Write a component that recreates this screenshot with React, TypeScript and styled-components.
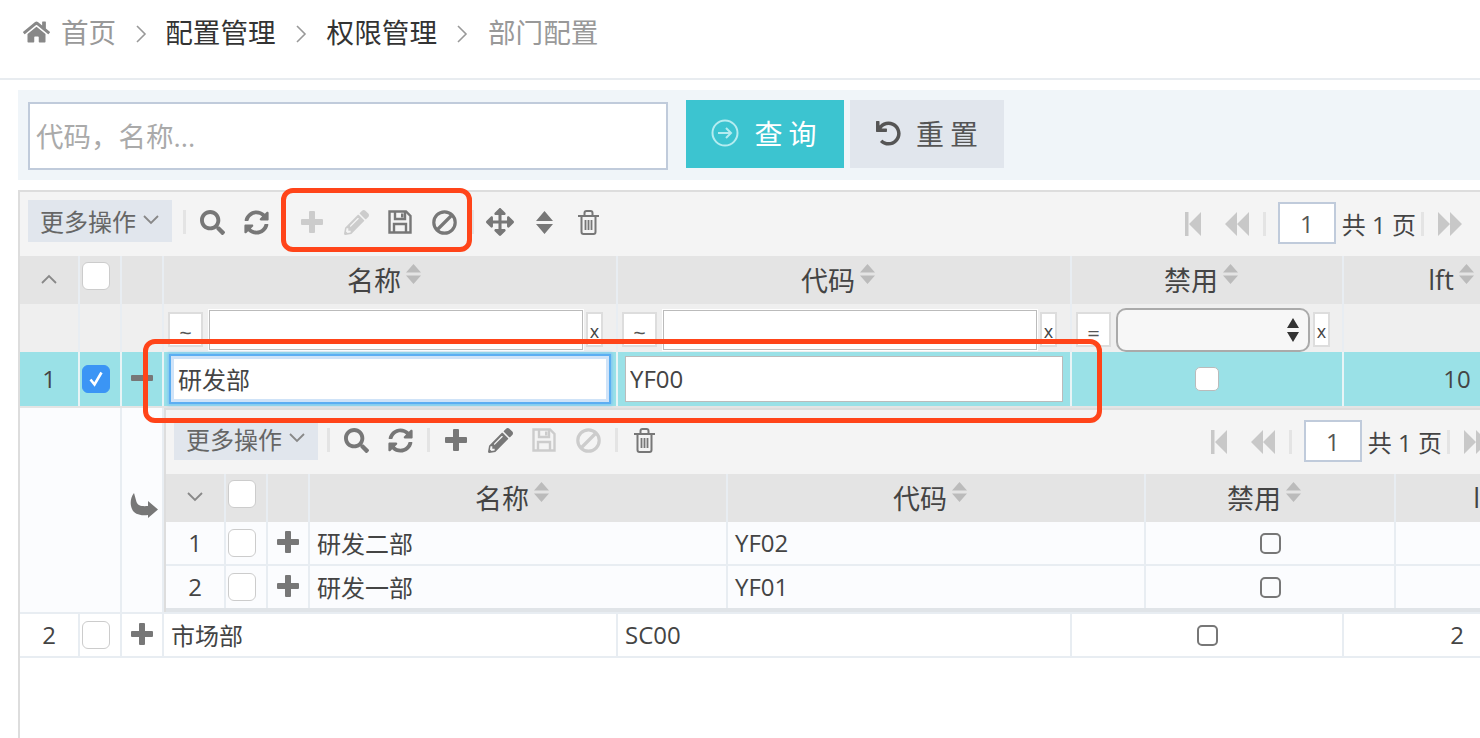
import React from "react";
import styled, { createGlobalStyle } from "styled-components";
import { FaArrowsAlt, FaHome, FaPencilAlt, FaSearch, FaSyncAlt, FaUndo } from "react-icons/fa";

const GlobalStyle = createGlobalStyle`
  html, body {
    margin: 0;
    padding: 0;
    background: #ffffff;
    overflow: hidden;
  }
  body {
    font-family: "Open Sans", "Noto Sans CJK SC", sans-serif;
    color: #444444;
  }
  * { box-sizing: border-box; }
`;

const Page = styled.div`
  position: relative;
  width: 1480px;
  height: 738px;
  overflow: hidden;
`;

const Breadcrumb = styled.div`
  height: 80px;
  border-bottom: 2px solid #e8ecf0;
  display: flex;
  align-items: flex-start;
  padding: 15px 0 0 23px;
  font-size: 27.6px;
  line-height: 34px;
`;

const Crumb = styled.span<{ $muted?: boolean }>`
  color: ${({ $muted }) => ($muted ? "#999999" : "#333333")};
`;

const CrumbArrow = styled.svg<{ $tight?: boolean }>`
  width: 12px;
  height: 20px;
  margin: 9px ${({ $tight }) => ($tight ? "18px" : "20px")} 0 19px;
  fill: none;
  stroke: #999999;
  stroke-width: 1.6;
`;

const HomeIcon = styled(FaHome)`
  width: 27px;
  height: 24px;
  margin: 5px 11px 0 0;
  color: #888888;
`;

const SearchPanel = styled.div`
  margin: 10px 0 0 18px;
  height: 90px;
  background: #f0f5f9;
  display: flex;
  align-items: flex-start;
  padding: 10px 0 0 10px;
`;

const SearchInput = styled.input`
  width: 640px;
  height: 68px;
  margin: 2px 18px 0 0;
  border: 2px solid #c0cbdb;
  background: #ffffff;
  padding: 0 6px;
  font: 27.5px "Open Sans", "Noto Sans CJK SC", sans-serif;
  outline: none;
  &::placeholder {
    color: #aaaaaa;
    opacity: 1;
  }
`;

const SearchButton = styled.div<{ $primary?: boolean }>`
  height: 68px;
  width: ${({ $primary }) => ($primary ? "158px" : "154px")};
  margin-right: 6px;
  padding: 0 0 2px ${({ $primary }) => ($primary ? "4px" : "6px")};
  display: flex;
  align-items: center;
  justify-content: center;
  gap: 15px;
  background: ${({ $primary }) => ($primary ? "#3cc4d0" : "#e1e6ed")};
  color: ${({ $primary }) => ($primary ? "#ffffff" : "#555555")};
  font-size: 28px;
  letter-spacing: 6px;
`;

const Grid = styled.div`
  margin: 10px 0 0 18px;
  width: 1600px;
  height: 548px;
  border-left: 2px solid #dddddd;
  border-top: 2px solid #dddddd;
`;

const Toolbar = styled.div<{ $width: number }>`
  width: ${({ $width }) => $width}px;
  height: 64px;
  background: #f4f4f4;
  display: flex;
  align-items: flex-start;
  padding: 8px 0 0 8px;
`;

const MoreButton = styled.div<{ $nested?: boolean }>`
  width: 144px;
  height: 42px;
  margin-right: ${({ $nested }) => ($nested ? "4px" : "6px")};
  padding-bottom: 2px;
  background: #e1e6ed;
  display: flex;
  align-items: center;
  justify-content: center;
  gap: 6px;
  color: #666666;
  font-size: 24px;
  white-space: nowrap;
`;

const ToolSlot = styled.div<{ $off?: boolean }>`
  width: 44px;
  height: 42px;
  flex: none;
  display: flex;
  align-items: center;
  justify-content: center;
  padding-top: 2px;
  font-size: 25px;
  color: ${({ $off }) => ($off ? "#cccccc" : "#777777")};
`;

const PagerSlot = styled(ToolSlot)`
  color: #c8c8c8;
`;

const ToolSep = styled.div`
  width: 12px;
  height: 42px;
  flex: none;
  display: flex;
  align-items: center;
  justify-content: center;
  padding-top: 2px;
  &::before {
    content: "";
    width: 3px;
    height: 24px;
    background: #e4e4e4;
  }
`;

const Pager = styled.div`
  margin-left: auto;
  display: flex;
  align-items: center;
  font-size: 24px;
  color: #444444;
  white-space: nowrap;
  margin-top: 2px;
`;

const PageInput = styled.div`
  width: 58px;
  height: 42px;
  margin: 0 6px 0 7px;
  border: 2px solid #c0cbdb;
  background: #ffffff;
  display: flex;
  align-items: center;
  justify-content: center;
  color: #555555;
`;

const Row = styled.div<{ $cols: string; $h: number; $bg: string; $sep?: string }>`
  display: grid;
  grid-template-columns: ${({ $cols }) => $cols};
  column-gap: 2px;
  height: ${({ $h }) => $h}px;
  background: ${({ $sep }) => $sep || "#e8edf2"};
  & > * {
    background: ${({ $bg }) => $bg};
  }
`;

const RowSep = styled.div<{ $color?: string }>`
  height: 2px;
  background: ${({ $color }) => $color || "#e8edf2"};
`;

const Cell = styled.div<{ $align?: string }>`
  display: flex;
  align-items: center;
  justify-content: ${({ $align }) => $align || "flex-start"};
  padding: 0 7px 2px;
  font-size: 24px;
  overflow: hidden;
  white-space: nowrap;
`;

const CheckCell = styled(Cell)`
  padding: 0 0 0 2px;
`;

const HeadCell = styled(Cell)`
  justify-content: center;
  padding: 0 11px 2px 0;
  font-size: 27px;
  color: #444444;
`;

const SortMark = styled.svg`
  width: 17px;
  height: 20px;
  margin: -10px 0 0 4px;
  fill: #bbbbbb;
`;

const Check = styled.span<{ $on?: boolean; $top?: number }>`
  width: 28px;
  height: 28px;
  flex: none;
  border-radius: 6px;
  border: 1px solid ${({ $on }) => ($on ? "#3b95f5" : "#cccccc")};
  background: ${({ $on }) => ($on ? "#3b95f5" : "#ffffff")};
  display: flex;
  align-items: center;
  justify-content: center;
  margin-top: ${({ $top }) => $top || 0}px;
`;

const BoolBox = styled.span<{ $focus?: boolean }>`
  width: ${({ $focus }) => ($focus ? "24px" : "21px")};
  height: ${({ $focus }) => ($focus ? "24px" : "21px")};
  border-radius: 5px;
  background: ${({ $focus }) => ($focus ? "#ffffff" : "transparent")};
  border: ${({ $focus }) => ($focus ? "1px solid #bbbbbb" : "2px solid #777777")};
  margin-top: 2px;
`;

const Toggle = styled.svg`
  width: 22px;
  height: 22px;
  fill: #777777;
  flex: none;
`;

const FilterCell = styled.div`
  display: flex;
  align-items: flex-start;
  padding: 6px 0 0 4px;
`;

const FilterOp = styled.div`
  width: 35px;
  height: 35px;
  margin-top: 2px;
  padding-top: 4px;
  flex: none;
  border: 2px solid #dddddd;
  background: #ffffff;
  display: flex;
  align-items: center;
  justify-content: center;
  font-size: 22px;
  color: #555555;
`;

const FilterInput = styled.div`
  width: 374px;
  height: 40px;
  margin-left: 6px;
  border: 1px solid #bbbbbb;
  outline: 1px solid #ffffff;
  background: #ffffff;
`;

const FilterClear = styled.div`
  width: 17px;
  height: 35px;
  margin: 2px 0 0 3px;
  padding-top: 2px;
  flex: none;
  border: 2px solid #dddddd;
  background: #ffffff;
  display: flex;
  align-items: center;
  justify-content: center;
  font-size: 18px;
  color: #444444;
`;

const FakeSelect = styled.div`
  width: 194px;
  height: 44px;
  margin: -2px 0 0 5px;
  flex: none;
  border: 2px solid #aaaaaa;
  border-radius: 10px;
  background: #f7f7f7;
  display: flex;
  align-items: center;
  justify-content: flex-end;
  padding-right: 8px;
`;

const EditCell = styled.div`
  display: flex;
  align-items: center;
  padding: 0 7px;
`;

const EditInput = styled.input<{ $focus?: boolean }>`
  width: 438px;
  height: 46px;
  padding: 0 3px 2px 4px;
  font: 24px "Open Sans", "Noto Sans CJK SC", sans-serif;
  color: #444444;
  background: #ffffff;
  outline: none;
  border: ${({ $focus }) => ($focus ? "3px solid #cfe3f8" : "1px solid #bbbbbb")};
  box-shadow: ${({ $focus }) => ($focus ? "0 0 0 2px #5caef2, 0 0 3px 3px #7cc0f5" : "0 0 0 1px #ffffff inset")};
`;

const DetailRow = styled.div`
  display: grid;
  grid-template-columns: 100px 40px 1434px;
  column-gap: 2px;
  height: 204px;
  background: #e8edf2;
`;

const DetailBlank = styled.div`
  background: #fbfcfe;
`;

const DetailArrow = styled.div`
  background: #fbfcfe;
  padding: 85px 0 0 9px;
  & > svg {
    overflow: visible;
  }
`;

const Nested = styled.div`
  border-top: 2px solid #dddddd;
  border-left: 2px solid #dddddd;
  height: 204px;
  background: #fbfcfe;
`;

const NestedEnd = styled.div`
  height: 4px;
  background: #e0e4e8;
`;

const Annotation = styled.div<{ $box: [number, number, number, number] }>`
  position: absolute;
  left: ${({ $box }) => $box[0]}px;
  top: ${({ $box }) => $box[1]}px;
  width: ${({ $box }) => $box[2]}px;
  height: ${({ $box }) => $box[3]}px;
  border: 5px solid #ff4419;
  border-radius: 12px;
  pointer-events: none;
`;

const Chevron = ({ up }: { up?: boolean }) => (
  <svg width="18" height="12" viewBox="0 0 18 12" fill="none" stroke="#888888" strokeWidth="1.8">
    <path d={up ? "M2 10 L9 3 L16 10" : "M2 2 L9 9 L16 2"} />
  </svg>
);

const SelectArrows = () => (
  <svg width="14" height="26" viewBox="0 0 14 26" fill="#333333">
    <path d="M7 1 L13 11 L1 11 Z M7 25 L13 15 L1 15 Z" />
  </svg>
);

const Arrow = ({ tight }: { tight?: boolean }) => (
  <CrumbArrow $tight={tight} viewBox="0 0 12 20">
    <path d="M2 2 L10 10 L2 18" />
  </CrumbArrow>
);

const PLUS_PATH =
  "M8 1 Q8 0 9 0 H13 Q14 0 14 1 V8 H21 Q22 8 22 9 V13 Q22 14 21 14 H14 V21 Q14 22 13 22 H9 Q8 22 8 21 V14 H1 Q0 14 0 13 V9 Q0 8 1 8 H8 Z";

const PlusGlyph = () => (
  <svg width="22" height="22" viewBox="0 0 22 22" fill="currentColor">
    <path d={PLUS_PATH} />
  </svg>
);

const SaveGlyph = () => (
  <svg width="24" height="24" viewBox="0 0 24 24" fill="none" stroke="currentColor" strokeWidth="2.4">
    <path d="M1.5 1.5 H18 L22.5 6 V22.5 H1.5 Z" />
    <path d="M7 1.5 V9 H17 V1.5" />
    <path d="M6 22.5 V14 H18 V22.5" />
    <path d="M13 3.5 H15.5 V7.5 H13 Z" fill="currentColor" stroke="none" />
  </svg>
);

const BanGlyph = () => (
  <svg width="25" height="25" viewBox="0 0 25 25" fill="none" stroke="currentColor" strokeWidth="3.2">
    <circle cx="12.5" cy="12.5" r="10.7" />
    <path d="M5 20 L20 5" />
  </svg>
);

const UpDownGlyph = () => (
  <svg width="17" height="23" viewBox="0 0 17 23" fill="currentColor">
    <path d="M8.5 0 L17 10 H0 Z M8.5 23 L17 13 H0 Z" />
  </svg>
);

const TrashGlyph = () => (
  <svg width="21" height="25" viewBox="0 0 21 25" fill="none" stroke="currentColor" strokeWidth="2">
    <path d="M3.5 7 V22 Q3.5 24 5.5 24 H15.5 Q17.5 24 17.5 22 V7" />
    <path d="M0 6 H21" />
    <path d="M6.5 6 V3 Q6.5 1 8.5 1 H12.5 Q14.5 1 14.5 3 V6" />
    <path d="M7.5 10 V20 M10.5 10 V20 M13.5 10 V20" strokeWidth="1.8" />
  </svg>
);

const FirstGlyph = ({ flip }: { flip?: boolean }) => (
  <svg width="16" height="24" viewBox="0 0 16 24" fill="currentColor" transform={flip ? "scale(-1 1)" : undefined}>
    <path d="M0 0 H3.5 V24 H0 Z M4 12 L16 0 V24 Z" />
  </svg>
);

const PrevGlyph = ({ flip }: { flip?: boolean }) => (
  <svg width="24" height="24" viewBox="0 0 24 24" fill="currentColor" transform={flip ? "scale(-1 1)" : undefined}>
    <path d="M12 0 V24 L0 12 Z M24 0 V24 L12 12 Z" />
  </svg>
);

const OUTER_COLS = "58px 40px 40px 452px 452px 270px 226px";
const NESTED_COLS = "58px 40px 40px 416px 416px 248px 212px";

const ToolbarRow = ({ nested }: { nested?: boolean }) => (
  <Toolbar $width={nested ? 1376 : 1496}>
    <MoreButton $nested={nested}>
      更多操作
      <Chevron />
    </MoreButton>
    <ToolSep />
    <ToolSlot><FaSearch /></ToolSlot>
    <ToolSlot><FaSyncAlt /></ToolSlot>
    <ToolSep />
    <ToolSlot $off={!nested}><PlusGlyph /></ToolSlot>
    <ToolSlot $off={!nested}><FaPencilAlt /></ToolSlot>
    <ToolSlot $off={nested}><SaveGlyph /></ToolSlot>
    <ToolSlot $off={nested}><BanGlyph /></ToolSlot>
    <ToolSep />
    {!nested && <ToolSlot><FaArrowsAlt size={28} /></ToolSlot>}
    {!nested && <ToolSlot><UpDownGlyph /></ToolSlot>}
    <ToolSlot><TrashGlyph /></ToolSlot>
    <Pager>
      <PagerSlot><FirstGlyph /></PagerSlot>
      <PagerSlot><PrevGlyph /></PagerSlot>
      <ToolSep />
      <PageInput>1</PageInput>
      共 1 页
      <ToolSep />
      <PagerSlot><PrevGlyph flip /></PagerSlot>
      <PagerSlot><FirstGlyph flip /></PagerSlot>
    </Pager>
  </Toolbar>
);

const Head = ({ cols, down }: { cols: string; down?: boolean }) => (
  <Row $cols={cols} $h={48} $bg="#e4e4e4">
    <Cell $align="center"><Chevron up={!down} /></Cell>
    <CheckCell><Check $top={-8} /></CheckCell>
    <Cell />
    {["名称", "代码", "禁用", "lft"].map((label) => (
      <HeadCell key={label}>
        {label}
        <SortMark viewBox="0 0 17 20">
          <path d="M8.5 0 L16 8.5 H1 Z M8.5 20 L16 11.5 H1 Z" />
        </SortMark>
      </HeadCell>
    ))}
  </Row>
);

const DataRow = ({ cols, n, name, code, last }: { cols: string; n: number; name: string; code: string; last: string }) => (
  <Row $cols={cols} $h={42} $bg={cols === OUTER_COLS ? "#ffffff" : "#fbfcfe"}>
    <Cell $align="center">{n}</Cell>
    <CheckCell><Check /></CheckCell>
    <Cell $align="center">
      <Toggle viewBox="0 0 22 22">
        <path d={PLUS_PATH} />
      </Toggle>
    </Cell>
    <Cell>{name}</Cell>
    <Cell>{code}</Cell>
    <Cell $align="center"><BoolBox /></Cell>
    <Cell $align="center">{last}</Cell>
  </Row>
);

const App = () => (
  <Page>
    <GlobalStyle />
    <Breadcrumb>
      <HomeIcon />
      <Crumb $muted>首页</Crumb>
      <Arrow tight />
      <Crumb>配置管理</Crumb>
      <Arrow />
      <Crumb>权限管理</Crumb>
      <Arrow />
      <Crumb $muted>部门配置</Crumb>
    </Breadcrumb>

    <SearchPanel>
      <SearchInput placeholder="代码，名称..." />
      <SearchButton $primary>
        <svg width="28" height="28" viewBox="0 0 28 28" fill="none" stroke="#b5ecf0" strokeWidth="2">
          <circle cx="14" cy="14" r="12.5" />
          <path d="M7 14 H20 M15 9 L20 14 L15 19" />
        </svg>
        查询
      </SearchButton>
      <SearchButton>
        <FaUndo size={25} color="#555555" />
        重置
      </SearchButton>
    </SearchPanel>

    <Grid>
      <ToolbarRow />
      <Head cols={OUTER_COLS} />

      <Row $cols={OUTER_COLS} $h={48} $bg="#efefef">
        <Cell />
        <Cell />
        <Cell />
        <FilterCell>
          <FilterOp>~</FilterOp>
          <FilterInput />
          <FilterClear>x</FilterClear>
        </FilterCell>
        <FilterCell>
          <FilterOp>~</FilterOp>
          <FilterInput />
          <FilterClear>x</FilterClear>
        </FilterCell>
        <FilterCell>
          <FilterOp>=</FilterOp>
          <FakeSelect><SelectArrows /></FakeSelect>
          <FilterClear>x</FilterClear>
        </FilterCell>
        <Cell />
      </Row>

      <Row $cols={OUTER_COLS} $h={54} $bg="#9ae1e7" $sep="#e8f4f6">
        <Cell $align="center">1</Cell>
        <CheckCell>
          <Check $on>
            <svg width="18" height="18" viewBox="0 0 18 18" fill="none" stroke="#ffffff" strokeWidth="2.6">
              <path d="M3.5 9.5 L7.5 14.5 L14.5 2.5" />
            </svg>
          </Check>
        </CheckCell>
        <Cell $align="center">
          <Toggle viewBox="0 0 22 22">
            <path d="M1 8 H21 Q22 8 22 9 V13 Q22 14 21 14 H1 Q0 14 0 13 V9 Q0 8 1 8 Z" />
          </Toggle>
        </Cell>
        <EditCell><EditInput $focus defaultValue="研发部" /></EditCell>
        <EditCell><EditInput defaultValue="YF00" /></EditCell>
        <Cell $align="center"><BoolBox $focus /></Cell>
        <Cell $align="center">10</Cell>
      </Row>
      <RowSep $color="#e4e4e4" />

      <DetailRow>
        <DetailBlank />
        <DetailArrow>
          <svg width="28" height="26" viewBox="0 0 28 26" fill="#777777">
            <path d="M3 0 C-1 5 -1 12 1 16 C3 21 9 23 17 22 V25 L27 16.5 L17 8 V13 C11 13.5 7 13 5.5 9 C4.5 6 4 3 3 0 Z" />
          </svg>
        </DetailArrow>
        <Nested>
          <ToolbarRow nested />
          <Head cols={NESTED_COLS} down />
          <DataRow cols={NESTED_COLS} n={1} name="研发二部" code="YF02" last="" />
          <RowSep />
          <DataRow cols={NESTED_COLS} n={2} name="研发一部" code="YF01" last="" />
          <NestedEnd />
        </Nested>
      </DetailRow>
      <RowSep />

      <DataRow cols={OUTER_COLS} n={2} name="市场部" code="SC00" last="2" />
      <RowSep />
    </Grid>

    <Annotation $box={[281, 188, 191, 64]} />
    <Annotation $box={[143, 339, 959, 84]} />
  </Page>
);

export default App;
